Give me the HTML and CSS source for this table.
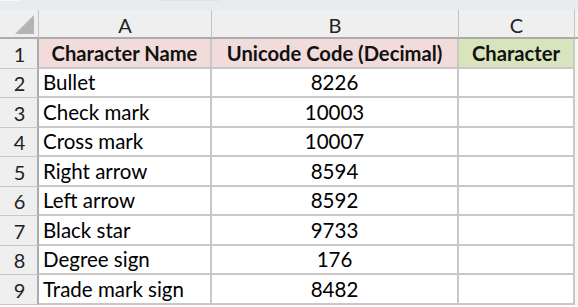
FILE: index.html
```html
<!DOCTYPE html>
<html>
<head>
<meta charset="utf-8">
<link rel="stylesheet" href="styles.css">
</head>
<body>
<div class="topbar"><span class="seg seg1"></span><span class="seg seg2"></span><span class="seg seg3"></span></div>
<div class="sheet">
  <div class="corner"><span class="tri"></span></div>
  <div class="colhead">A</div>
  <div class="colhead">B</div>
  <div class="colhead">C</div>
  <div class="colhead edge"></div>

  <div class="rowhead r30">1</div>
  <div class="cell hdr pink r30">Character Name</div>
  <div class="cell hdr pink r30">Unicode Code (Decimal)</div>
  <div class="cell hdr green r30">Character</div>
  <div class="cell edge r30"></div>

  <div class="rowhead">2</div>
  <div class="cell name">Bullet</div>
  <div class="cell num">8226</div>
  <div class="cell"></div>
  <div class="cell edge"></div>

  <div class="rowhead">3</div>
  <div class="cell name">Check mark</div>
  <div class="cell num">10003</div>
  <div class="cell"></div>
  <div class="cell edge"></div>

  <div class="rowhead">4</div>
  <div class="cell name">Cross mark</div>
  <div class="cell num">10007</div>
  <div class="cell"></div>
  <div class="cell edge"></div>

  <div class="rowhead">5</div>
  <div class="cell name">Right arrow</div>
  <div class="cell num">8594</div>
  <div class="cell"></div>
  <div class="cell edge"></div>

  <div class="rowhead">6</div>
  <div class="cell name">Left arrow</div>
  <div class="cell num">8592</div>
  <div class="cell"></div>
  <div class="cell edge"></div>

  <div class="rowhead">7</div>
  <div class="cell name">Black star</div>
  <div class="cell num">9733</div>
  <div class="cell"></div>
  <div class="cell edge"></div>

  <div class="rowhead">8</div>
  <div class="cell name">Degree sign</div>
  <div class="cell num">176</div>
  <div class="cell"></div>
  <div class="cell edge"></div>

  <div class="rowhead">9</div>
  <div class="cell name">Trade mark sign</div>
  <div class="cell num">8482</div>
  <div class="cell"></div>
  <div class="cell edge"></div>
</div>
</body>
</html>
```

FILE: styles.css
```css
html, body {
  margin: 0;
  padding: 0;
  background: #ffffff;
  width: 578px;
  height: 307px;
  overflow: hidden;
}
body {
  font-family: Lato, "Open Sans", sans-serif;
  color: #000;
}
.topbar {
  height: 10px;
  background: #e9ecef;
  display: flex;
  position: relative;
}
.seg { display: block; height: 1px; background: #f7f8f9; }
.seg1 { width: 20px; }
.seg2 { margin-left: 140px; width: 60px; background: #dfe3e7; }
.seg3 { margin-left: 0; width: 0; }
.sheet {
  display: grid;
  grid-template-columns: 39px 173px 247px 116px 3px;
  grid-template-rows: 29px 30px 29px 30px 29px 30px 29px 30px 29px 30px;
}
.sheet > div {
  box-sizing: border-box;
  display: flex;
  align-items: center;
  font-size: 20.5px;
  line-height: 1;
}
.corner {
  background: #efefef;
  border-right: 1px solid #c3c3c3;
  border-bottom: 2px solid #ababab;
  position: relative;
}
.tri {
  position: absolute;
  right: 4px;
  bottom: 3px;
  width: 0;
  height: 0;
  border-left: 19px solid transparent;
  border-bottom: 19px solid #b4b4b4;
}
.sheet > .colhead {
  background: #efefef;
  border-right: 1px solid #c3c3c3;
  border-bottom: 2px solid #ababab;
  justify-content: center;
  color: #222;
  padding-top: 3px;
  font-size: 20px;
}
.colhead.edge { border-right: none; background: #f3f3f3; }
.sheet > .rowhead {
  background: #efefef;
  border-right: 2px solid #ababab;
  border-bottom: 1px solid #c8c8c8;
  justify-content: center;
  color: #222;
  padding-left: 2px;
  font-size: 20px;
}
.cell {
  border-right: 2px solid #c8c8c8;
  border-bottom: 2px solid #c8c8c8;
  background: #fff;
}
.cell.edge { border-right: none; border-bottom: none; background: #f6f6f6; }
.sheet > .hdr {
  font-weight: 700;
  justify-content: center;
  color: #111;
  font-size: 20.2px;
  padding-top: 1px;
}
.pink { background: #f2dcdb; }
.green { background: #d8e4bc; }
.name { padding-left: 4px; }
.num { justify-content: center; }
```
